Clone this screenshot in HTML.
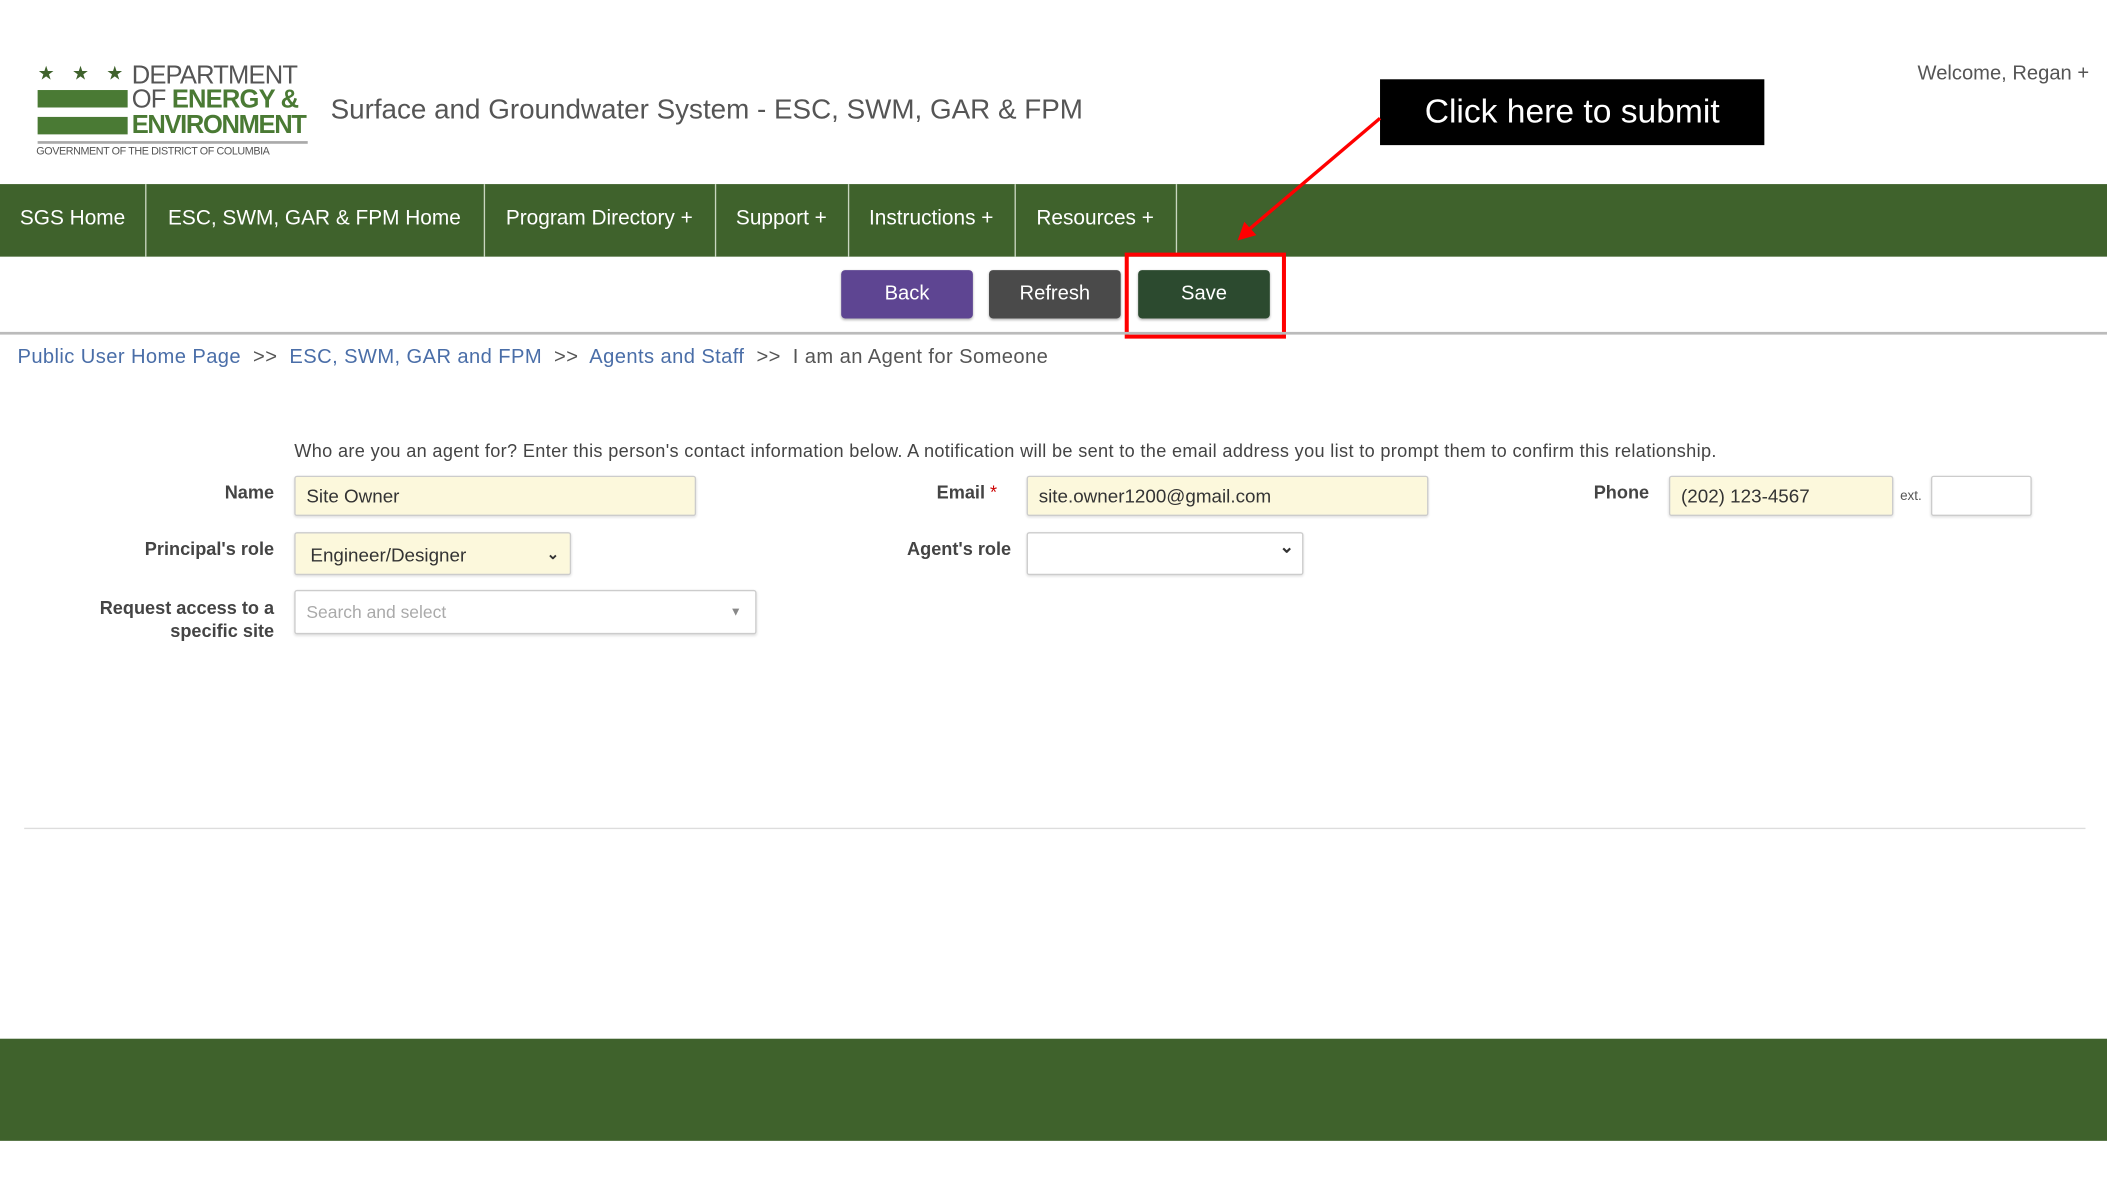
<!DOCTYPE html>
<html><head><meta charset="utf-8"><style>
html,body{margin:0;padding:0;width:2107px;height:1178px;overflow:hidden;background:#fff}
#w{position:absolute;left:0;top:0;width:1568px;height:877px;transform:scale(1.34375);transform-origin:0 0;font-family:"Liberation Sans",sans-serif}
.a{position:absolute;white-space:nowrap}
.nav{position:absolute;left:0;top:137px;width:1568px;height:54px;background:#3f622c}
.ni{position:absolute;top:0;height:54px;line-height:52px;color:#fff;font-size:15.5px;text-align:center;border-right:1px solid #c9d6c0}
.btn{position:absolute;top:201px;height:36px;width:98px;border-radius:3px;color:#fff;font-size:15px;line-height:36px;text-align:center;box-shadow:0 1px 2px rgba(0,0,0,.3)}
.lbl{position:absolute;font-size:13.5px;font-weight:bold;color:#444;text-align:right}
.in{position:absolute;height:30px;border:1px solid #ccc;border-radius:2px;box-sizing:border-box;font-size:14px;color:#333;line-height:28px;padding-left:8px;box-shadow:0 1px 2px rgba(0,0,0,.12)}
.y{background:#fcf8dc}
.bc{color:#4a6ea8}
</style></head><body><div id="w">
<div class="a" style="left:28px;top:46px;color:#3f622c;font-size:14px;letter-spacing:13px">★★★</div>
<div class="a" style="left:28px;top:67px;width:67px;height:13px;background:#4a7a34"></div>
<div class="a" style="left:28px;top:87px;width:67px;height:13px;background:#4a7a34"></div>
<div class="a" style="left:98px;top:47px;font-size:19px;color:#555;line-height:19px;letter-spacing:-0.6px">DEPARTMENT</div>
<div class="a" style="left:98px;top:65px;font-size:19px;color:#555;line-height:19px;letter-spacing:-0.6px">OF <span style="color:#4a7a34;font-weight:bold">ENERGY &amp;</span></div>
<div class="a" style="left:98px;top:84px;font-size:19px;color:#4a7a34;font-weight:bold;line-height:19px;letter-spacing:-1px">ENVIRONMENT</div>
<div class="a" style="left:28px;top:105px;width:201px;height:2px;background:#aaa"></div>
<div class="a" style="left:27px;top:108px;font-size:8px;color:#555;letter-spacing:-0.3px">GOVERNMENT OF THE DISTRICT OF COLUMBIA</div>
<div class="a" style="left:246px;top:70px;font-size:20.7px;color:#555">Surface and Groundwater System - ESC, SWM, GAR &amp; FPM</div>
<div class="a" style="left:1427px;top:46px;font-size:15px;color:#555">Welcome, Regan +</div>
<div class="nav">
<div class="ni" style="left:0;width:108px">SGS Home</div>
<div class="ni" style="left:108px;width:252px">ESC, SWM, GAR &amp; FPM Home</div>
<div class="ni" style="left:360px;width:172px">Program Directory +</div>
<div class="ni" style="left:532px;width:99px">Support +</div>
<div class="ni" style="left:631px;width:124px">Instructions +</div>
<div class="ni" style="left:755px;width:120px">Resources +</div>
</div>
<div class="btn" style="left:626px;background:#5e4592">Back</div>
<div class="btn" style="left:736px;background:#4a4a4a">Refresh</div>
<div class="btn" style="left:847px;background:#2c4a2f">Save</div>
<div class="a" style="left:837px;top:188px;width:114px;height:58px;border:3px solid #f00"></div>
<div class="a" style="left:1027px;top:59px;width:286px;height:49px;background:#000;color:#fff;font-size:25px;line-height:49px;text-align:center">Click here to submit</div>
<svg class="a" style="left:0;top:0" width="1568" height="300"><line x1="1027" y1="88" x2="928" y2="172" stroke="#f00" stroke-width="2.5"/><polygon points="921,179 926,165 935,175" fill="#f00"/></svg>
<div class="a" style="left:0;top:247px;width:1568px;height:2px;background:#bbb"></div>
<div class="a" style="left:13px;top:257px;font-size:15px;color:#555;letter-spacing:0.3px"><span class="bc">Public User Home Page</span> &nbsp;&gt;&gt;&nbsp; <span class="bc">ESC, SWM, GAR and FPM</span> &nbsp;&gt;&gt;&nbsp; <span class="bc">Agents and Staff</span> &nbsp;&gt;&gt;&nbsp; I am an Agent for Someone</div>
<div class="a" style="left:219px;top:328px;font-size:13.5px;color:#444;letter-spacing:0.25px">Who are you an agent for? Enter this person's contact information below. A notification will be sent to the email address you list to prompt them to confirm this relationship.</div>
<div class="lbl" style="right:1364px;top:359px">Name</div>
<div class="in y" style="left:219px;top:354px;width:299px">Site Owner</div>
<div class="lbl" style="left:697px;top:359px">Email <span style="color:#c00;font-weight:normal">*</span></div>
<div class="in y" style="left:764px;top:354px;width:299px">site.owner1200@gmail.com</div>
<div class="lbl" style="left:1186px;top:359px">Phone</div>
<div class="in y" style="left:1242px;top:354px;width:167px">(202) 123-4567</div>
<div class="a" style="left:1414px;top:364px;font-size:10px;color:#555">ext.</div>
<div class="in" style="left:1437px;top:354px;width:75px;background:#fff"></div>
<div class="lbl" style="right:1364px;top:401px">Principal's role</div>
<div class="in y" style="left:219px;top:396px;width:206px;height:32px;line-height:32px;padding-left:11px">Engineer/Designer<span style="position:absolute;right:8px;font-size:11px;font-weight:bold">&#8964;</span></div>
<div class="lbl" style="left:675px;top:401px">Agent's role</div>
<div class="in" style="left:764px;top:396px;width:206px;height:32px;background:#fff"><span style="position:absolute;right:6px;top:-4px;font-size:13px;font-weight:bold">&#8964;</span></div>
<div class="lbl" style="right:1364px;top:444px;line-height:17px">Request access to a<br>specific site</div>
<div class="in" style="left:219px;top:439px;width:344px;height:33px;line-height:31px;color:#aaa;font-size:13px;background:#fff">Search and select<span style="position:absolute;right:10px;top:0;color:#888;font-size:9px">▼</span></div>
<div class="a" style="left:18px;top:616px;width:1534px;height:1px;background:#ddd"></div>
<div class="a" style="left:0;top:773px;width:1568px;height:76px;background:#3f622c"></div>
</div></body></html>
